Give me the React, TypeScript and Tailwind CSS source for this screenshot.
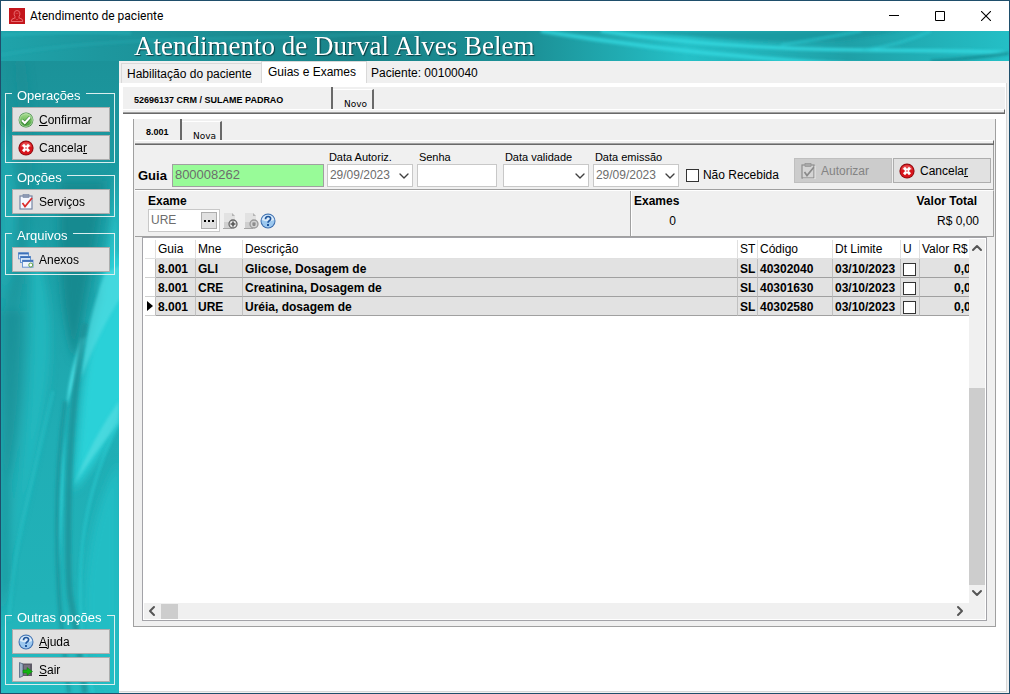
import React from "react";
import clsx from "clsx";
import { ChevronDown, ChevronLeft, ChevronRight, ChevronUp } from "lucide-react";

interface ExamRow {
  guia: string;
  mne: string;
  descricao: string;
  st: string;
  codigo: string;
  dtLimite: string;
  valor: string;
}

const EXAMS: ExamRow[] = [
  { guia: "8.001", mne: "GLI", descricao: "Glicose, Dosagem de", st: "SL", codigo: "40302040", dtLimite: "03/10/2023", valor: "0,00" },
  { guia: "8.001", mne: "CRE", descricao: "Creatinina, Dosagem de", st: "SL", codigo: "40301630", dtLimite: "03/10/2023", valor: "0,00" },
  { guia: "8.001", mne: "URE", descricao: "Uréia, dosagem de", st: "SL", codigo: "40302580", dtLimite: "03/10/2023", valor: "0,00" },
];

/* ---------- icons ---------- */

function ConfirmIcon() {
  return (
    <svg viewBox="0 0 16 16" className="h-4 w-4 shrink-0">
      <defs>
        <linearGradient id="okFill" x1="0" y1="0" x2="0" y2="1">
          <stop offset="0" stopColor="#a6dc8c" />
          <stop offset="1" stopColor="#3f9e35" />
        </linearGradient>
      </defs>
      <circle cx="8" cy="8" r="7.4" fill="#3c8b3c" />
      <circle cx="8" cy="8" r="6.4" fill="url(#okFill)" stroke="#d6efcb" strokeWidth="0.7" />
      <path d="M4 8.4l2.8 2.8L12 5.4" fill="none" stroke="#2f7a2f" strokeWidth="3.4" />
      <path d="M4 8.2l2.8 2.8L12 5.2" fill="none" stroke="#fff" strokeWidth="2.2" />
    </svg>
  );
}

function CancelIcon() {
  return (
    <svg viewBox="0 0 16 16" className="h-4 w-4 shrink-0">
      <circle cx="8" cy="8" r="7.6" fill="#8e0d12" />
      <circle cx="8" cy="8" r="6.6" fill="#d8141c" />
      <path d="M2.4 6.5a5.8 5.8 0 0 1 11.2 0q-5.6 2-11.2 0z" fill="#ee6a6a" opacity=".6" />
      <path d="M5 4.8l6 6.4M11 4.8l-6 6.4" stroke="#fff" strokeWidth="2.8" />
      <circle cx="8" cy="8" r=".8" fill="#d8141c" />
    </svg>
  );
}

function ClipboardIcon({ disabled }: { disabled?: boolean }) {
  const frame = disabled ? "#8d8d8d" : "#7685a3";
  return (
    <svg viewBox="0 0 16 16" className="h-4 w-4 shrink-0">
      <rect x="2" y="2" width="12" height="13" fill={disabled ? "#d4d4d4" : "#f5f8ff"} stroke={frame} strokeWidth="1.2" />
      <rect x="5" y="0.5" width="6" height="3" fill={disabled ? "#a8a8a8" : "#8e9ab4"} stroke={frame} strokeWidth="0.6" />
      <path d="M4.5 9l2.5 3.5L14 4" fill="none" stroke={disabled ? "#8a8a8a" : "#dc2b2b"} strokeWidth="1.7" />
      {disabled && <path d="M15 3v13H3" fill="none" stroke="#f2f2f2" strokeWidth="0.8" />}
    </svg>
  );
}

function AttachIcon() {
  return (
    <svg viewBox="0 0 16 16" className="h-4 w-4 shrink-0">
      <rect x="0.5" y="0.8" width="10" height="6" fill="#d8e8fb" stroke="#6c98d2" />
      <path d="M0.5 1.5h10" stroke="#3b6fb8" strokeWidth="1.8" />
      <rect x="2.5" y="4.5" width="10" height="6" fill="#e3effc" stroke="#6c98d2" />
      <path d="M2.5 5.2h10" stroke="#3b6fb8" strokeWidth="1.8" />
      <rect x="4.5" y="8.2" width="10.5" height="7" fill="#eef5fd" stroke="#6c98d2" />
      <path d="M4.5 9h10.5" stroke="#3b6fb8" strokeWidth="1.8" />
      <circle cx="12.8" cy="13" r="2" fill="#fff" stroke="#5da043" />
    </svg>
  );
}

function HelpIcon() {
  return (
    <svg viewBox="0 0 16 16" className="h-4 w-4 shrink-0">
      <circle cx="8" cy="8" r="7.5" fill="#3f6fae" />
      <circle cx="8" cy="8" r="6.5" fill="#9cc8ef" />
      <path d="M1.9 7a6.2 6.2 0 0 1 12.2 0q-6 2.500-12.200 0z" fill="#dcecfa" />
      <path d="M5.500 6.200q0-2.700 2.600-2.700t2.500 2.200q0 1.200-1.300 2Q8 8.500 8 9.700" fill="none" stroke="#1f559c" strokeWidth="1.700" />
      <rect x="7" y="11" width="2" height="2" fill="#1f559c" />
    </svg>
  );
}

function ExitIcon() {
  return (
    <svg viewBox="0 0 16 16" className="h-4 w-4 shrink-0">
      <path d="M4 1.5h10V14H4z" fill="#5e5a66" />
      <path d="M6 3h6v10H6z" fill="#777280" />
      <path d="M1.5 0.5L5 2v12l-3.5 1.5z" fill="#9fb0c6" stroke="#52627c" strokeWidth="0.8" />
      <path d="M5 8h4V5.500l5.500 4L9 13.500V11H5z" fill="#12b312" stroke="#0c7a0c" strokeWidth="0.5" />
    </svg>
  );
}

function DocIcon({ kind }: { kind: "add" | "remove" }) {
  return (
    <svg viewBox="0 0 16 16" className="h-4 w-4 shrink-0">
      <path d="M1 0h8l3 3v12H1z" fill="#e2e2e2" />
      <path d="M1 9h11v6H1z" fill="#cfcfcf" />
      <path d="M9 0v3h3z" fill="#b4b4b4" />
      <path d="M0 15.500h9" stroke="#a6a6a6" />
      <circle cx="10" cy="11" r="4" fill={kind === "add" ? "#e4e4e4" : "#d2d2d2"} stroke={kind === "add" ? "#666" : "#999"} strokeWidth="1.3" />
      {kind === "add" ? (
        <path d="M10 8.600v4.800M7.600 11h4.800" stroke="#555" strokeWidth="1.600" />
      ) : (
        <path d="M8.600 9.600l2.800 2.800M11.400 9.600l-2.800 2.800" stroke="#8c8c8c" strokeWidth="1.500" />
      )}
    </svg>
  );
}

function AppIcon() {
  return (
    <svg viewBox="0 0 16 16" className="h-4 w-4 shrink-0">
      <rect width="16" height="16" fill="#c4161c" />
      <path
        d="M6 8.500Q4.800 7 5.200 4.800 5.700 2.500 8 2.500t2.800 2.300Q11.200 7 10 8.500v1.300l3 1.400q.7.600.7 2.300H2.300q0-1.700.7-2.300l3-1.400z"
        fill="none"
        stroke="#f08084"
        strokeWidth="0.8"
      />
      <path d="M6.500 5q1.500 1 3 0M6.500 10.500l1.500 1.500 1.500-1.500" fill="none" stroke="#e0555a" strokeWidth="0.7" />
    </svg>
  );
}

/* ---------- background art ---------- */

function BannerArt() {
  return (
    <svg viewBox="0 0 1008 30" preserveAspectRatio="none" className="absolute inset-0 h-full w-full">
      <defs>
        <linearGradient id="bannerBase">
          <stop offset="0" stopColor="#1fa3aa" />
          <stop offset=".1" stopColor="#1d979e" />
          <stop offset=".35" stopColor="#198389" />
          <stop offset=".52" stopColor="#1b8f95" />
          <stop offset=".68" stopColor="#25c0c7" />
          <stop offset=".84" stopColor="#1fa0a7" />
          <stop offset="1" stopColor="#24bfc6" />
        </linearGradient>
        <filter id="bannerSoft" x="-5%" y="-50%" width="110%" height="200%">
          <feGaussianBlur stdDeviation="1.5" />
        </filter>
      </defs>
      <rect width="1008" height="30" fill="url(#bannerBase)" />
      <g filter="url(#bannerSoft)" fill="none">
        <path d="M0 24Q80 10 200 8T420 0" stroke="#2cb9c0" strokeWidth="2" opacity=".4" />
        <path d="M0 4Q60 0 130 2" stroke="#27bcc4" strokeWidth="3" opacity=".5" />
        <path d="M540 0Q650 18 760 27T900 34" stroke="#35dbe2" strokeWidth="4" opacity=".8" />
        <path d="M600 0Q720 18 860 19T1008 22" stroke="#35d9e0" strokeWidth="3" />
        <path d="M640 0Q760 14 840 10L900 0z" fill="#1b969d" opacity=".8" />
        <path d="M780 14Q820 8 860 0M862 19Q900 14 930 0" stroke="#2acbd2" strokeWidth="2" opacity=".8" />
        <path d="M930 30Q970 28 1008 22" stroke="#178e95" strokeWidth="3" />
      </g>
    </svg>
  );
}

function SidebarArt() {
  return (
    <svg viewBox="0 0 118 632" preserveAspectRatio="none" className="absolute inset-0 h-full w-full">
      <defs>
        <linearGradient id="sideBase" x1="0" y1="0" x2="0" y2="1">
          <stop offset="0" stopColor="#1b9299" />
          <stop offset=".3" stopColor="#1d9fa6" />
          <stop offset=".6" stopColor="#20aeb5" />
          <stop offset=".85" stopColor="#21b2b8" />
          <stop offset="1" stopColor="#24bcc2" />
        </linearGradient>
        <filter id="sideSoft" x="-20%" y="-20%" width="140%" height="140%">
          <feGaussianBlur stdDeviation="4" />
        </filter>
        <filter id="sideFine" x="-20%" y="-20%" width="140%" height="140%">
          <feGaussianBlur stdDeviation="1.5" />
        </filter>
      </defs>
      <rect width="118" height="632" fill="url(#sideBase)" />
      <g filter="url(#sideSoft)">
        <path d="M0 60Q20 120 14 200L0 240z" fill="#23b1b8" opacity=".7" />
        <path d="M24 0Q40 110 22 220T4 400V250Q24 120 14 0z" fill="#188a90" opacity=".4" />
        <path d="M30 170Q60 250 44 340T8 500Q34 380 30 170z" fill="#24bdc4" opacity=".7" />
        <path d="M60 120L104 120Q84 240 74 300 54 240 60 120z" fill="#178a90" />
        <path d="M118 100Q112 170 98 230L118 240z" fill="#2ac8cf" />
        <path d="M22 250Q22 350 8 420V520L0 560V250z" fill="#178f96" opacity=".7" />
        <path d="M112 200Q86 270 80 340T72 430Q106 390 126 340V190z" fill="#2ad1d8" />
        <path d="M118 400Q90 450 84 520T110 632h8z" fill="#23bdc4" />
      </g>
      <g filter="url(#sideFine)">
        <path d="M80 278Q66 320 66 345 74 320 84 276z" fill="#48dde2" />
        <path d="M64 370Q56 440 58 510 62 440 64 370z" fill="#2dcdd4" />
        <path d="M104 212Q86 260 80 318 98 270 120 236V204z" fill="#4fdce1" opacity=".7" />
        <path d="M118 340Q90 380 73 424 90 396 118 362z" fill="#55dde1" opacity=".7" />
      </g>
      <g filter="url(#sideFine)" fill="none">
        <path d="M64 340Q56 400 56 460T60 560L68 632" stroke="#189298" strokeWidth="4" opacity=".7" />
        <path d="M84 262Q70 340 68 430T70 540 84 632" stroke="#178f95" strokeWidth="6" opacity=".7" />
        <path d="M118 360Q84 430 80 500T92 632" stroke="#28d0d7" strokeWidth="2" opacity=".7" />
        <path d="M52 330Q38 390 24 450T8 560" stroke="#2ac5cc" strokeWidth="3" opacity=".5" />
      </g>
    </svg>
  );
}

/* ---------- small building blocks ---------- */

interface PushButtonProps {
  icon: React.ReactNode;
  children: React.ReactNode;
  disabled?: boolean;
}

function PushButton({ icon, children, disabled }: PushButtonProps) {
  return (
    <button
      type="button"
      disabled={disabled}
      className={clsx(
        "flex h-[25px] w-[98px] items-center gap-[5px] border pl-[5px] text-[12px]",
        disabled ? "border-[#bfbfbf] bg-[#cccccc] text-[#838383]" : "border-[#adadad] bg-[#e1e1e1] text-black"
      )}
    >
      {icon}
      <span>{children}</span>
    </button>
  );
}

function Group({ title, className, children }: { title: string; className?: string; children: React.ReactNode }) {
  return (
    <fieldset className={clsx("border border-[#d9eeee] pt-[3px] pr-1 pb-0.5 pl-1.5", className)}>
      <legend className="px-[5px] pt-1.5 text-[13px] leading-4 text-white">{title}</legend>
      <div className="flex flex-col gap-[3px]">{children}</div>
    </fieldset>
  );
}

// thick bevel below a row of tabs
function Bevel() {
  return <div className="h-[5px] border-t border-r border-b border-t-white border-r-[#696969] border-b-[#696969] bg-[#f0f0f0] shadow-[inset_0_-1px_0_#a0a0a0]" />;
}

function DateSelect({ id, label, value }: { id: string; label: string; value?: string }) {
  return (
    <div className="w-[86px]">
      <label htmlFor={id} className="ml-0.5 block text-[11px] leading-[14px] whitespace-nowrap">{label}</label>
      <div className="relative">
        <select id={id} className="block h-[23px] w-full appearance-none border border-[#c8c8c8] bg-white pb-0.5 pl-0.5 text-[12px] text-[#6d6d6d]">
          <option>{value}</option>
        </select>
        <ChevronDown className="pointer-events-none absolute top-1 right-px h-4 w-4 text-[#404040]" />
      </div>
    </div>
  );
}

const CHECKBOX = "block h-[13px] w-[13px] appearance-none border border-[#333333] bg-white";
const HEAD = "border-r border-b border-[#e0e0e0] px-0.5 text-left font-normal";
const CELL = "border-r border-b border-r-[#c0c0c0] border-b-[#a0a0a0] bg-[#e2e2e2] px-0.5 pt-0.5 whitespace-nowrap overflow-hidden";
const ARROW = "h-4 w-4 shrink-0 text-[#555555]";

function ExamTable() {
  return (
    <table className="w-full table-fixed border-separate border-spacing-0 text-[12px] leading-4">
      <colgroup>
        <col className="w-[11px]" />
        <col className="w-[40px]" />
        <col className="w-[47px]" />
        <col />
        <col className="w-[20px]" />
        <col className="w-[75px]" />
        <col className="w-[68px]" />
        <col className="w-[19px]" />
        <col className="w-[49px]" />
      </colgroup>
      <thead>
        <tr className="h-[19px]">
          <th className="border-r border-b border-[#e0e0e0] p-0" />
          <th className={HEAD}>Guia</th>
          <th className={HEAD}>Mne</th>
          <th className={HEAD}>Descrição</th>
          <th className={HEAD}>ST</th>
          <th className={HEAD}>Código</th>
          <th className={HEAD}>Dt Limite</th>
          <th className={HEAD}>U</th>
          <th className="overflow-hidden border-b border-[#e0e0e0] pl-0.5 text-left font-normal whitespace-nowrap">Valor R$</th>
        </tr>
      </thead>
      <tbody className="font-bold">
        {EXAMS.map((row, i) => (
          <tr key={row.codigo} className="h-[19px]">
            <td className="border-r border-b border-r-[#c0c0c0] border-b-[#d0d0d0] bg-white p-0">
              {i === EXAMS.length - 1 && (
                <svg viewBox="0 0 6 10" className="ml-0.5 h-2.5 w-1.5">
                  <path d="M0 0l6 5-6 5z" />
                </svg>
              )}
            </td>
            <td className={CELL}>{row.guia}</td>
            <td className={CELL}>{row.mne}</td>
            <td className={CELL}>{row.descricao}</td>
            <td className={CELL}>{row.st}</td>
            <td className={CELL}>{row.codigo}</td>
            <td className={CELL}>{row.dtLimite}</td>
            <td className={CELL}>
              <input type="checkbox" aria-label={`U ${row.mne}`} className={CHECKBOX} />
            </td>
            <td className="overflow-hidden border-b border-[#a0a0a0] bg-[#e2e2e2] pt-0.5 pr-0 pl-[34px] text-clip whitespace-nowrap">{row.valor}</td>
          </tr>
        ))}
      </tbody>
    </table>
  );
}

function ExamGrid() {
  return (
    <div className="mr-[7px] mb-[5px] ml-[7px] flex flex-1 flex-col border border-[#a3a3a8] bg-white py-px pl-px">
      <div className="flex flex-1">
        <div className="min-w-0 flex-1 pt-px pl-px">
          <ExamTable />
        </div>
        <div className="flex w-4 flex-col items-center bg-[#f0f0f0]">
          <ChevronUp strokeWidth={3} className={clsx(ARROW, "mt-px")} />
          <div className="mt-auto h-[197px] w-full bg-[#cdcdcd]" />
          <ChevronDown strokeWidth={3} className={clsx(ARROW, "mb-0.5")} />
        </div>
        <div className="w-px bg-white" />
      </div>
      <div className="mr-px flex h-4 items-center bg-[#f0f0f0]">
        <ChevronLeft strokeWidth={3} className={clsx(ARROW, "mr-px")} />
        <div className="h-[15px] w-[17px] bg-[#cdcdcd]" />
        <ChevronRight strokeWidth={3} className={clsx(ARROW, "mr-[17px] ml-auto")} />
      </div>
    </div>
  );
}

function GuideForm() {
  return (
    <div className="border-r border-b border-[#a0a0a0] pt-[5px] pb-0.5 pl-[3px]">
      <div className="flex">
        <div className="flex items-end gap-[5px]">
          <label htmlFor="guia" className="text-[13px] leading-[22px] font-bold">Guia</label>
          <input
            id="guia"
            readOnly
            defaultValue="800008262"
            className="h-[23px] w-[152px] border border-[#a0a0a0] bg-[#98fb98] pb-0.5 pl-0.5 text-[13px] text-[#6d6d6d] outline-none"
          />
        </div>
        <div className="ml-[3px] flex items-end gap-1">
          <DateSelect id="autoriz" label="Data Autoriz." value="29/09/2023" />
          <div className="mr-0.5 w-[80px]">
            <label htmlFor="senha" className="ml-0.5 block text-[11px] leading-[14px]">Senha</label>
            <input id="senha" className="block h-[23px] w-full border border-[#c8c8c8] bg-white px-0.5 text-[12px]" />
          </div>
          <DateSelect id="validade" label="Data validade" />
          <DateSelect id="emissao" label="Data emissão" value="29/09/2023" />
        </div>
        <div className="ml-[7px] flex items-center gap-1 self-end pb-1">
          <input id="naoRecebida" type="checkbox" className={CHECKBOX} />
          <label htmlFor="naoRecebida" className="text-[12px] leading-4 whitespace-nowrap">Não Recebida</label>
        </div>
        <div className="mt-2 mr-0.5 ml-auto flex gap-px">
          <PushButton icon={<ClipboardIcon disabled />} disabled>Autorizar</PushButton>
          <PushButton icon={<CancelIcon />}>Cancela<u>r</u></PushButton>
        </div>
      </div>
    </div>
  );
}

function ExamEntry() {
  return (
    <div className="flex border-t border-r border-b border-t-white border-r-[#a0a0a0] border-b-[#a0a0a0] text-[12px]">
      <div className="w-[496px] border-r border-[#a0a0a0] pt-0.5 pb-1 pl-[13px]">
        <label htmlFor="exame" className="block leading-4 font-bold">Exame</label>
        <div className="flex items-center">
          <div className="flex h-[23px] w-[72px] items-center border border-[#c8c8c8] bg-white pr-0.5">
            <input id="exame" defaultValue="URE" className="h-5 w-full min-w-0 pb-0.5 pl-0.5 text-[#6d6d6d] outline-none" />
            <button type="button" aria-label="Procurar exame" className="flex h-[17px] w-4 shrink-0 items-center justify-center gap-0.5 border border-[#adadad] bg-[#e1e1e1]">
              <span className="h-0.5 w-0.5 bg-black" />
              <span className="h-0.5 w-0.5 bg-black" />
              <span className="h-0.5 w-0.5 bg-black" />
            </button>
          </div>
          <button type="button" aria-label="Adicionar" className="ml-[3px]"><DocIcon kind="add" /></button>
          <button type="button" aria-label="Remover" className="ml-[5px]"><DocIcon kind="remove" /></button>
          <button type="button" aria-label="Ajuda do exame"><HelpIcon /></button>
        </div>
      </div>
      <div className="flex flex-1 justify-between border-l border-white pt-0.5 pr-[14px] pl-0.5">
        <div>
          <div className="leading-4 font-bold">Exames</div>
          <div className="mt-1 pl-8 text-center leading-4">0</div>
        </div>
        <div className="text-right">
          <div className="pr-0.5 leading-4 font-bold">Valor Total</div>
          <div className="mt-1 leading-4">R$ 0,00</div>
        </div>
      </div>
    </div>
  );
}

function Sidebar() {
  return (
    <aside className="relative flex w-[118px] shrink-0 flex-col px-1 pt-[21px] pb-2">
      <SidebarArt />
      <Group title="Operações" className="relative">
        <PushButton icon={<ConfirmIcon />}><u>C</u>onfirmar</PushButton>
        <PushButton icon={<CancelIcon />}>Cancela<u>r</u></PushButton>
      </Group>
      <Group title="Opções" className="relative mt-px">
        <PushButton icon={<ClipboardIcon />}>Serviços</PushButton>
      </Group>
      <Group title="Arquivos" className="relative mt-[5px]">
        <PushButton icon={<AttachIcon />}>Anexos</PushButton>
      </Group>
      <Group title="Outras opções" className="relative mt-auto">
        <PushButton icon={<HelpIcon />}><u>A</u>juda</PushButton>
        <PushButton icon={<ExitIcon />}><u>S</u>air</PushButton>
      </Group>
    </aside>
  );
}

export default function App() {
  return (
    <div className="flex min-h-screen flex-col border border-[#1f4e6b] bg-[#f0f0f0] font-['Liberation_Sans',Arial,sans-serif] text-black">
      <header className="flex h-[30px] items-center bg-white pl-2">
        <AppIcon />
        <h1 className="ml-[5px] font-[Roboto,sans-serif] text-[12px]">Atendimento de paciente</h1>
        <div className="ml-auto flex">
          <button type="button" aria-label="Minimizar" className="flex h-[30px] w-[46px] items-center justify-center">
            <svg viewBox="0 0 10 10" className="h-2.5 w-2.5"><path d="M0 4.500h10" stroke="#000" /></svg>
          </button>
          <button type="button" aria-label="Maximizar" className="flex h-[30px] w-[46px] items-center justify-center">
            <svg viewBox="0 0 10 10" className="h-2.5 w-2.5"><path d="M.5.5h9v9h-9z" fill="none" stroke="#000" /></svg>
          </button>
          <button type="button" aria-label="Fechar" className="flex h-[30px] w-[46px] items-center justify-center">
            <svg viewBox="0 0 10 10" className="h-2.5 w-2.5"><path d="M0 0l10 10M10 0L0 10" stroke="#000" strokeWidth="1.1" /></svg>
          </button>
        </div>
      </header>

      <div className="relative h-[30px]">
        <BannerArt />
        <h2 className="relative pl-[133px] font-['Liberation_Serif','Times_New_Roman',serif] text-[27px] leading-[30px] whitespace-nowrap text-white [text-shadow:1px_1px_1px_#0b3c40]">
          Atendimento de Durval Alves Belem
        </h2>
      </div>

      <div className="flex flex-1">
        <Sidebar />
        <main className="flex min-w-0 flex-1 flex-col pr-0.5 pb-px">
          <nav className="flex items-end pl-0.5 text-[12px]">
            <button type="button" className="mt-0.5 h-5 w-[140px] border-t border-l border-[#d9d9d9] pl-[5px] text-left">Habilitação do paciente</button>
            <button type="button" className="h-[22px] w-[106px] border-x border-t border-[#d9d9d9] bg-white pb-0.5 pl-1.5 text-left">Guias e Exames</button>
            <button type="button" className="h-5 px-1">Paciente: 00100040</button>
          </nav>

          <section className="flex flex-1 flex-col border-r border-b border-[#d9d9d9] bg-white pt-1">
            <div className="mr-px ml-1">
              <div className="flex h-[22px] items-stretch bg-[#f0f0f0] text-[9px]">
                <button type="button" className="w-[210px] border-r-2 border-[#696969] pt-1.5 pl-[11px] text-left font-bold">52696137 CRM / SULAME PADRAO</button>
                <button type="button" className="mt-0.5 w-[41px] border-t border-r-2 border-t-white border-r-[#696969] pt-2 pl-[11px] text-left font-['DejaVu_Sans',sans-serif]">Novo</button>
              </div>
              <Bevel />
            </div>

            <div className="mt-[5px] mr-2.5 mb-16 ml-[14px] flex flex-1 flex-col border-x border-b border-[#a0a0a0] bg-[#f0f0f0] px-px">
              <div className="flex h-[21px] items-stretch text-[9px]">
                <button type="button" className="w-[47px] border-r-2 border-[#696969] pt-1.5 pl-[11px] text-left font-bold">8.001</button>
                <button type="button" className="mt-0.5 w-[40px] border-t border-r-2 border-t-white border-r-[#696969] pt-2 pl-[11px] text-left font-['DejaVu_Sans',sans-serif]">Nova</button>
              </div>
              <Bevel />
              <GuideForm />
              <ExamEntry />
              <ExamGrid />
            </div>
          </section>
        </main>
      </div>
    </div>
  );
}
